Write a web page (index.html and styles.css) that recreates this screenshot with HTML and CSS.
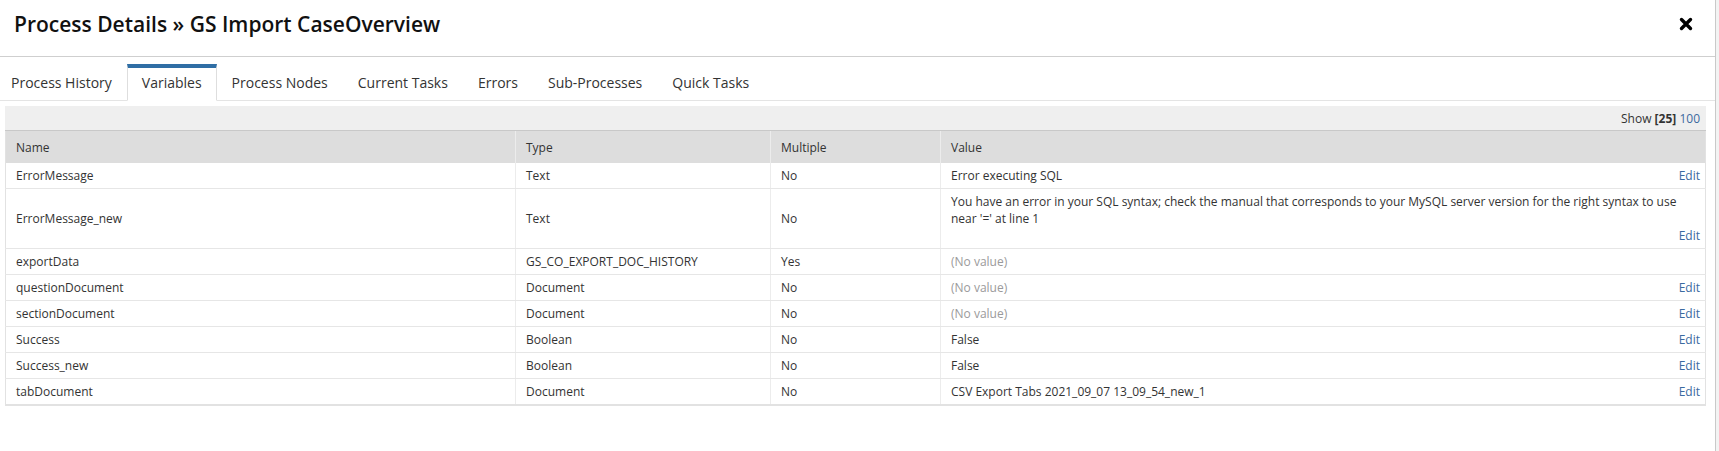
FILE: index.html
```html
<!DOCTYPE html>
<html>
<head>
<title>Process Details</title>
<link rel="stylesheet" href="styles.css">
</head>
<body>
  <div class="modal">
    <div class="modal-header">
      <h2 class="modal-title">Process Details &raquo; GS Import CaseOverview</h2>
      <button class="close" title="Close">
        <svg width="14" height="14" viewBox="0 0 14 14">
          <path d="M2.5 2.5 L11.5 11.5 M11.5 2.5 L2.5 11.5" stroke="#000" stroke-width="3.4" stroke-linecap="round"/>
        </svg>
      </button>
    </div>

    <ul class="tabs">
      <li class="tab">Process History</li>
      <li class="tab active">Variables</li>
      <li class="tab">Process Nodes</li>
      <li class="tab">Current Tasks</li>
      <li class="tab">Errors</li>
      <li class="tab">Sub-Processes</li>
      <li class="tab">Quick Tasks</li>
    </ul>

    <div class="tab-body">
      <div class="grid-toolbar">
        Show <b>[25]</b> <a href="#">100</a>
      </div>
      <table class="grid">
        <colgroup>
          <col class="col-name">
          <col class="col-type">
          <col class="col-multiple">
          <col class="col-value">
        </colgroup>
        <thead>
          <tr>
            <th>Name</th>
            <th>Type</th>
            <th>Multiple</th>
            <th>Value</th>
          </tr>
        </thead>
        <tbody>
          <tr>
            <td>ErrorMessage</td>
            <td>Text</td>
            <td>No</td>
            <td class="value"><div class="value-wrap"><span>Error executing SQL</span><a class="edit" href="#">Edit</a></div></td>
          </tr>
          <tr>
            <td>ErrorMessage_new</td>
            <td>Text</td>
            <td>No</td>
            <td class="value"><div class="value-wrap stacked"><span>You have an error in your SQL syntax; check the manual that corresponds to your MySQL server version for the right syntax to use near '=' at line 1</span><a class="edit" href="#">Edit</a></div></td>
          </tr>
          <tr>
            <td>exportData</td>
            <td>GS_CO_EXPORT_DOC_HISTORY</td>
            <td>Yes</td>
            <td class="value"><div class="value-wrap"><span class="empty">(No value)</span></div></td>
          </tr>
          <tr>
            <td>questionDocument</td>
            <td>Document</td>
            <td>No</td>
            <td class="value"><div class="value-wrap"><span class="empty">(No value)</span><a class="edit" href="#">Edit</a></div></td>
          </tr>
          <tr>
            <td>sectionDocument</td>
            <td>Document</td>
            <td>No</td>
            <td class="value"><div class="value-wrap"><span class="empty">(No value)</span><a class="edit" href="#">Edit</a></div></td>
          </tr>
          <tr>
            <td>Success</td>
            <td>Boolean</td>
            <td>No</td>
            <td class="value"><div class="value-wrap"><span>False</span><a class="edit" href="#">Edit</a></div></td>
          </tr>
          <tr>
            <td>Success_new</td>
            <td>Boolean</td>
            <td>No</td>
            <td class="value"><div class="value-wrap"><span>False</span><a class="edit" href="#">Edit</a></div></td>
          </tr>
          <tr>
            <td>tabDocument</td>
            <td>Document</td>
            <td>No</td>
            <td class="value"><div class="value-wrap"><span>CSV Export Tabs 2021_09_07 13_09_54_new_1</span><a class="edit" href="#">Edit</a></div></td>
          </tr>
        </tbody>
      </table>
    </div>
  </div>
</body>
</html>
```

FILE: styles.css
```css
body {
  margin: 0;
  background-color: #f3f3f3;
  font-family: "Open Sans", "Liberation Sans", sans-serif;
  color: #333;
  height: 451px;
  overflow: hidden;
}

.modal {
  width: 1716px;
  height: 100%;
  box-sizing: border-box;
  background-color: #fff;
  border-right: 1px solid #c9c9c9;
}

.modal-header {
  display: flex;
  justify-content: space-between;
  height: 57px;
  box-sizing: border-box;
  padding: 12px 22px 0 14px;
  border-bottom: 1px solid #cfcfcf;
}

.modal-title {
  margin: 0;
  font-size: 21px;
  font-weight: 600;
  line-height: 24px;
  color: #111;
}

.close {
  background: none;
  border: none;
  padding: 0;
  height: 24px;
  cursor: pointer;
}

.close svg {
  display: block;
}

.tabs {
  list-style: none;
  display: flex;
  margin: 7px 0 0 0;
  padding: 0;
  border-bottom: 1px solid #e4e4e4;
}

.tab {
  font-size: 14px;
  line-height: 20px;
  padding: 5px 14px 7px;
  border-top: 4px solid transparent;
  border-left: 1px solid transparent;
  border-right: 1px solid transparent;
  color: #333;
  margin-bottom: -1px;
  cursor: pointer;
}

.tab:first-child {
  padding-left: 10px;
}

.tab.active {
  border-top-color: #2f6ea5;
  border-left-color: #dedede;
  border-right-color: #dedede;
  border-bottom: 1px solid #fff;
  background-color: #fff;
}

.tab-body {
  padding: 5px 9px 0 5px;
}

.grid-toolbar {
  background-color: #efefef;
  border-bottom: 1px solid #c8c8c8;
  height: 24px;
  line-height: 26px;
  font-size: 12px;
  text-align: right;
  padding-right: 6px;
  color: #333;
}

.grid-toolbar a {
  color: #3b6aa0;
  text-decoration: none;
}

.grid {
  width: 100%;
  border-collapse: collapse;
  table-layout: fixed;
  font-size: 12px;
  border-left: 1px solid #e2e2e2;
  border-right: 1px solid #e2e2e2;
  border-bottom: 2px solid #e2e2e2;
}

.col-name { width: 30%; }
.col-type { width: 15%; }
.col-multiple { width: 10%; }
.col-value { width: 45%; }

.grid th {
  background-color: #dddddd;
  font-weight: normal;
  text-align: left;
  height: 32px;
  padding: 0 10px;
  border-left: 1px solid #ececec;
}

.grid th:first-child {
  border-left: none;
}

.grid td {
  height: 25px;
  padding: 4px 10px;
  line-height: 17px;
  border-bottom: 1px solid #e6e6e6;
  border-left: 1px solid #ececec;
  vertical-align: middle;
  box-sizing: border-box;
}

.grid td.value {
  padding-right: 5px;
}

.grid td:first-child {
  border-left: none;
}

.value-wrap {
  display: flex;
  justify-content: space-between;
}

.value-wrap.stacked {
  flex-direction: column;
}

.value-wrap.stacked .edit {
  align-self: flex-end;
}

.empty {
  color: #9a9a9a;
}

.edit {
  color: #3b6aa0;
  text-decoration: none;
}
```
